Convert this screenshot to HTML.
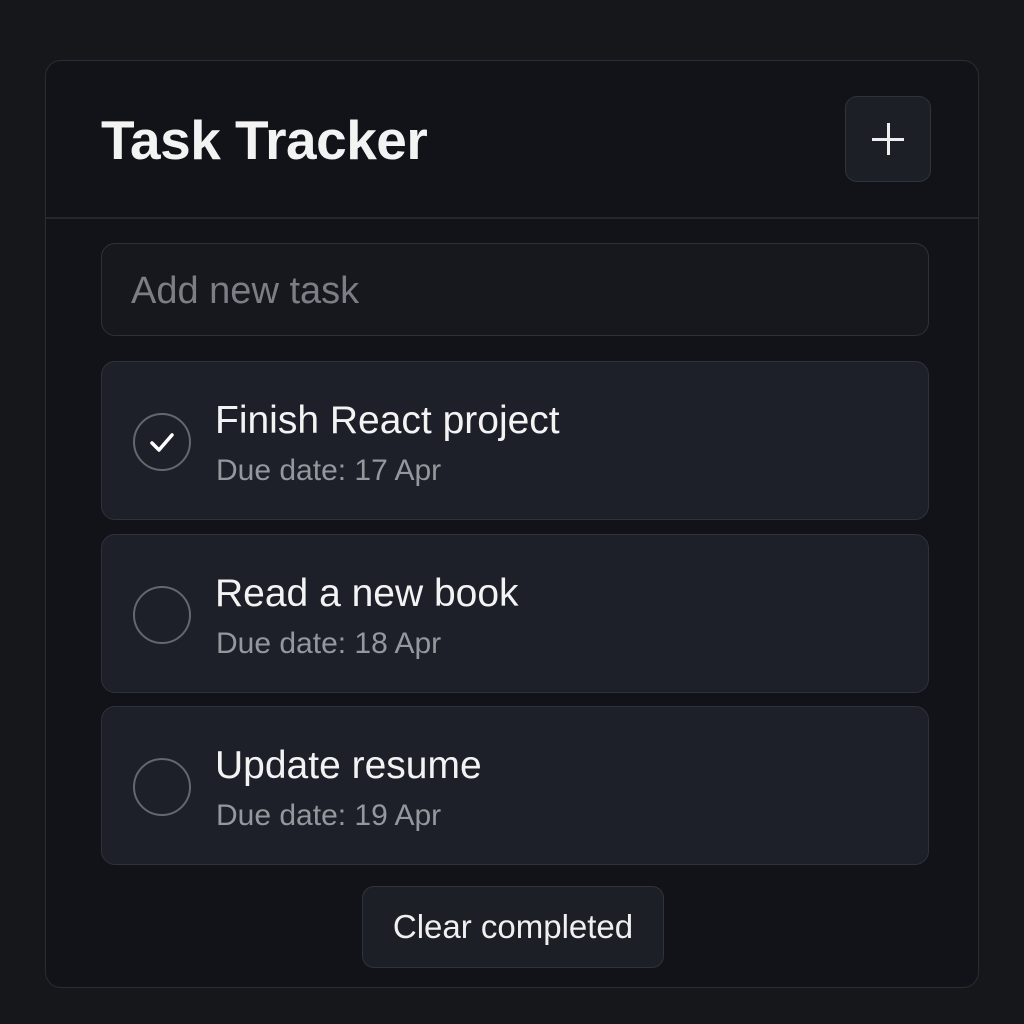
<!DOCTYPE html>
<html><head><meta charset="utf-8"><style>
*{box-sizing:border-box;margin:0;padding:0}
body{width:1024px;height:1024px;background:#15171b;font-family:"Liberation Sans",sans-serif;position:relative;overflow:hidden}
.card{position:absolute;left:45px;top:60px;width:934px;height:928px;background:#111318;border:1px solid #2a2d34;border-radius:16px}
.hdr{position:absolute;left:0;top:0;width:100%;height:158px;border-bottom:2px solid #24272d}
h1{position:absolute;left:55px;top:47px;font-size:55px;font-weight:bold;color:#f3f3f4;letter-spacing:-0.5px}
.plus{position:absolute;left:799px;top:35px;width:86px;height:86px;border:1px solid #30333a;border-radius:12px;background:#1c1f25}
.plus:before,.plus:after{content:"";position:absolute;background:#eee;left:26px;top:41px;width:32px;height:3px}
.plus:after{left:40.5px;top:26px;width:3px;height:32px}
.input{position:absolute;left:55px;top:182px;width:828px;height:93px;border:1px solid #2e3138;border-radius:14px;background:#16181d;color:#7b7e84;font-size:38px;padding:26px 0 0 29px}
.task{position:absolute;left:55px;width:828px;height:159px;border:1px solid #2f323a;border-radius:14px;background:#1d2028}
.circ{position:absolute;left:31px;top:51px;width:58px;height:58px;border:2px solid #64676d;border-radius:50%}
.t{position:absolute;left:113px;top:37px;font-size:39px;color:#f3f3f4}
.d{position:absolute;left:114px;top:92px;font-size:30px;color:#94979c}
.btn{position:absolute;left:316px;top:825px;width:302px;height:82px;border:1px solid #30333a;border-radius:12px;background:#1c1f25;color:#f0f0f0;font-size:33px;text-align:center;line-height:80px}
</style></head><body>
<div class="card">
<div class="hdr"><h1>Task Tracker</h1><div class="plus"></div></div>
<div class="input">Add new task</div>
<div class="task" style="top:300px"><div class="circ"><svg width="54" height="54" viewBox="0 0 54 54"><path d="M17 28l7 7 13-15" fill="none" stroke="#fff" stroke-width="3.5" stroke-linecap="round" stroke-linejoin="round"/></svg></div><div class="t">Finish React project</div><div class="d">Due date: 17 Apr</div></div>
<div class="task" style="top:473px"><div class="circ"></div><div class="t">Read a new book</div><div class="d">Due date: 18 Apr</div></div>
<div class="task" style="top:645px"><div class="circ"></div><div class="t">Update resume</div><div class="d">Due date: 19 Apr</div></div>
<div class="btn">Clear completed</div>
</div>
</body></html>
